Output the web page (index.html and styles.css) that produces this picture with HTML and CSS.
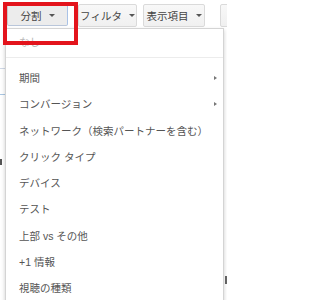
FILE: index.html
```html
<!DOCTYPE html>
<html lang="ja">
<head>
<meta charset="utf-8">
<link rel="stylesheet" href="styles.css">
</head>
<body>
<div class="page">
  <div class="toolbar">
    <div class="btn btn-split is-open">分割<span class="caret"></span></div>
    <div class="btn btn-filter">フィルタ<span class="caret"></span></div>
    <div class="btn btn-cols">表示項目<span class="caret"></span></div>
    <div class="btn btn-more"></div>
  </div>
  <div class="bg-marks">
    <span class="mark mark-a"></span>
    <span class="mark mark-b"></span>
    <span class="mark mark-c"></span>
    <span class="mark mark-d"></span>
  </div>
  <div class="menu">
    <div class="menu-item disabled">なし</div>
    <div class="sep"></div>
    <div class="menu-item has-sub">期間<span class="sub-arrow"></span></div>
    <div class="menu-item has-sub">コンバージョン<span class="sub-arrow"></span></div>
    <div class="menu-item">ネットワーク（検索パートナーを含む）</div>
    <div class="menu-item">クリック タイプ</div>
    <div class="menu-item">デバイス</div>
    <div class="menu-item">テスト</div>
    <div class="menu-item">上部 vs その他</div>
    <div class="menu-item">+1 情報</div>
    <div class="menu-item">視聴の種類</div>
  </div>
  <div class="highlight"></div>
</div>
</body>
</html>
```
FILE: styles.css
```css
html, body {
  margin: 0;
  padding: 0;
  background: #ffffff;
}
body {
  font-family: "Liberation Sans", "Noto Sans CJK JP", sans-serif;
  color: #555;
}
.page {
  position: relative;
  width: 227px;
  height: 300px;
  overflow: hidden;
}
.toolbar {
  display: flex;
  align-items: flex-start;
  padding-top: 4px;
  padding-left: 7px;
  width: 300px;
}
.btn {
  flex-shrink: 0;
  box-sizing: border-box;
  height: 23px;
  display: flex;
  align-items: center;
  justify-content: center;
  gap: 7px;
  font-size: 10.5px;
  color: #444;
  white-space: nowrap;
  background: linear-gradient(#f8f8f8, #f0f0f0);
  border: 1px solid #dadada;
  border-radius: 2px;
}
.btn-split {
  width: 61px;
  height: 22px;
  background: #ececec;
  border-color: #c8c8c8;
  border-right-color: #a9c2e6;
  border-bottom-color: #b9c6da;
}
.btn-filter {
  width: 59px;
  margin-left: 10px;
}
.btn-cols {
  width: 62px;
  margin-left: 6px;
}
.btn-more {
  width: 30px;
  margin-left: 15px;
}
.caret {
  width: 0;
  height: 0;
  border-left: 3px solid transparent;
  border-right: 3px solid transparent;
  border-top: 3px solid #555;
}
.bg-marks .mark {
  position: absolute;
  display: block;
}
.mark-a {
  left: 0;
  top: 68px;
  width: 5px;
  height: 1px;
  background: #cfd8e6;
}
.mark-b {
  left: 0;
  top: 94px;
  width: 5px;
  height: 1px;
  background: #a9c6e2;
}
.mark-c {
  left: 0;
  top: 159px;
  width: 2px;
  height: 6px;
  background: #555;
}
.mark-d {
  left: 225px;
  top: 276px;
  width: 2px;
  height: 8px;
  background: #666;
}
.menu {
  position: absolute;
  left: 5px;
  top: 28px;
  width: 219px;
  height: 290px;
  box-sizing: border-box;
  background: #fff;
  border: 1px solid #d4d4d4;
  box-shadow: 0 2px 4px rgba(0, 0, 0, 0.2);
  font-size: 10.5px;
}
.menu-item {
  position: relative;
  height: 26.25px;
  line-height: 26.25px;
  padding-left: 13px;
  color: #555;
  white-space: nowrap;
}
.menu-item.disabled {
  height: 26px;
  line-height: 26px;
  color: #b8b8b8;
}
.sep {
  height: 1px;
  background: #ececec;
  margin: 2px 0 7px;
}
.sub-arrow {
  position: absolute;
  right: 6px;
  top: 11px;
  width: 0;
  height: 0;
  border-top: 2.5px solid transparent;
  border-bottom: 2.5px solid transparent;
  border-left: 3px solid #777;
}
.highlight {
  position: absolute;
  left: 3px;
  top: 2px;
  width: 75px;
  height: 43px;
  box-sizing: border-box;
  border: 4px solid #e3141c;
}
```
